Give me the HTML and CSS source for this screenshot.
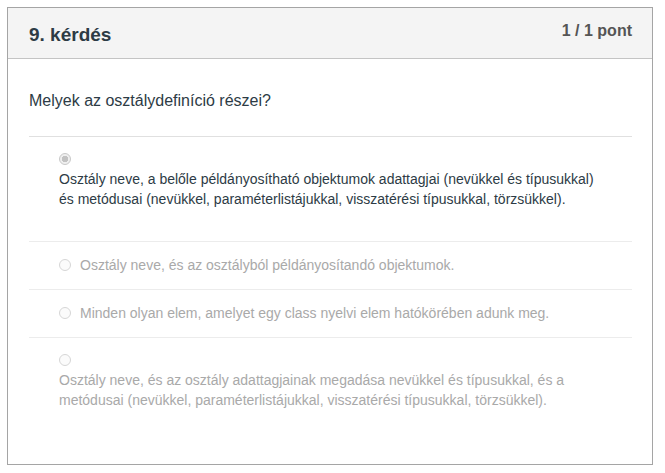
FILE: index.html
```html
<!DOCTYPE html>
<html lang="hu">
<head>
<meta charset="utf-8">
<link rel="stylesheet" href="styles.css">
</head>
<body>
<div class="card">
  <div class="header">
    <h2 class="title">9. kérdés</h2>
    <div class="points">1 / 1 pont</div>
  </div>
  <div class="body">
    <div class="question">Melyek az osztálydefiníció részei?</div>
    <div class="answers">
      <div class="answer block selected">
        <span class="radio checked"></span>
        <div class="atext">Osztály neve, a belőle példányosítható objektumok adattagjai (nevükkel és típusukkal) és metódusai (nevükkel, paraméterlistájukkal, visszatérési típusukkal, törzsükkel).</div>
      </div>
      <div class="answer inline">
        <span class="radio"></span>
        <div class="atext">Osztály neve, és az osztályból példányosítandó objektumok.</div>
      </div>
      <div class="answer inline">
        <span class="radio"></span>
        <div class="atext">Minden olyan elem, amelyet egy class nyelvi elem hatókörében adunk meg.</div>
      </div>
      <div class="answer block last">
        <span class="radio"></span>
        <div class="atext">Osztály neve, és az osztály adattagjainak megadása nevükkel és típusukkal, és a metódusai (nevükkel, paraméterlistájukkal, visszatérési típusukkal, törzsükkel).</div>
      </div>
    </div>
  </div>
</div>
</body>
</html>
```
FILE: styles.css
```css
* { box-sizing: border-box; }
html, body { margin: 0; padding: 0; background: #fff; }
body {
  padding: 7px 0 0 7px;
  font-family: "Liberation Sans", Arial, sans-serif;
  color: #2d3b45;
}
.card {
  width: 646px;
  height: 458px;
  border: 1px solid #a5a5a5;
  background: #fff;
}
.header {
  height: 51px;
  background: #f4f4f4;
  border-bottom: 1px solid #c4c4c4;
  display: flex;
  justify-content: space-between;
  align-items: flex-start;
  padding: 0 20px 0 21px;
}
.title {
  margin: 15px 0 0 0;
  font-size: 19px;
  line-height: 24px;
  font-weight: bold;
  color: #2d3b45;
}
.points {
  margin-top: 13px;
  font-size: 16px;
  line-height: 20px;
  font-weight: bold;
  color: #555;
}
.body {
  padding: 32px 20px 0 21px;
}
.question {
  font-size: 16px;
  line-height: 20px;
  padding-bottom: 25px;
  border-bottom: 1px solid #e0e0e0;
}
.answers { padding: 0; }
.answer {
  font-size: 14px;
  line-height: 20px;
  color: #a9a9a9;
  padding-left: 30px;
  padding-right: 30px;
  border-bottom: 1px solid #ececec;
}
.answer.last { border-bottom: none; }
.answer.selected { color: #2d3b45; }
.answer.block { padding-top: 16px; padding-bottom: 32px; }
.answer.inline {
  display: flex;
  align-items: center;
  padding-top: 13px;
  padding-bottom: 14px;
}
.radio {
  display: block;
  width: 12px;
  height: 12px;
  border-radius: 50%;
  border: 1px solid #d6d6d6;
  background: #fbfbfb;
}
.block .radio { margin-bottom: 4px; }
.inline .radio { margin-right: 9px; flex: none; }
.radio.checked {
  border-color: #c8c8c8;
  background: radial-gradient(circle, #c2c2c2 0 3px, #efefef 3.5px);
}
```
